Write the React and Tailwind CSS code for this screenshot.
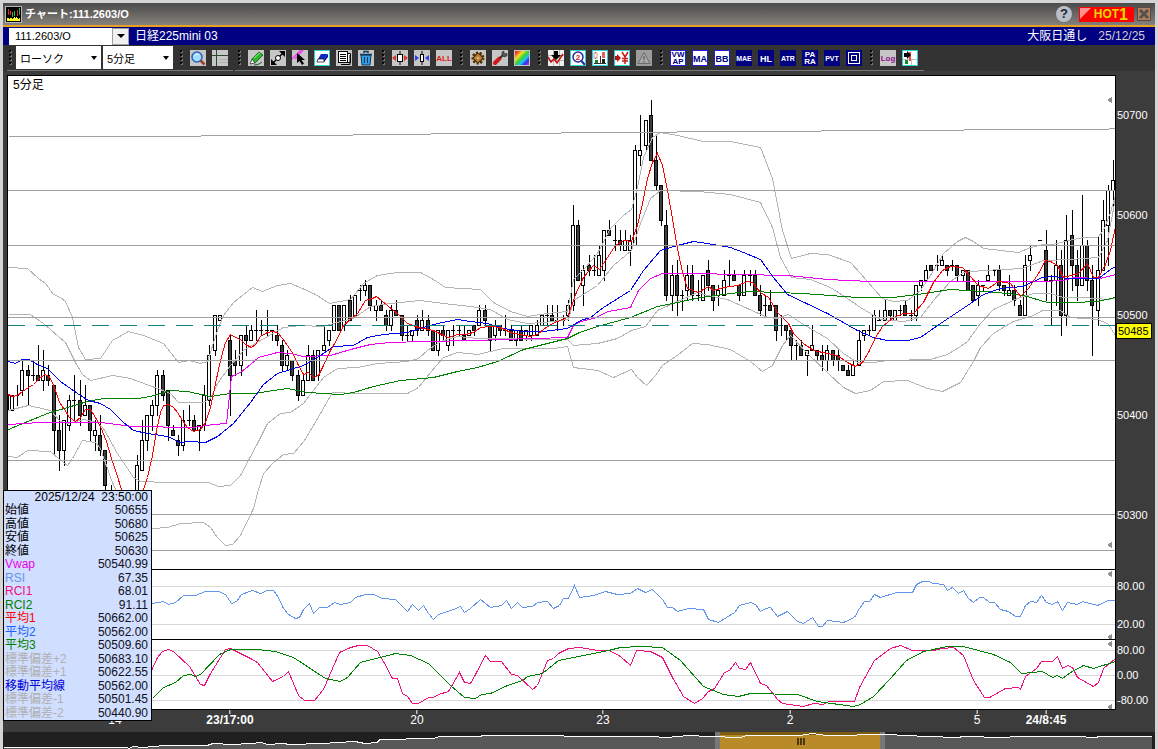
import { useState } from 'react'

// Each bar: [high, body top, body bottom, low, filled] on the chart's own vertical scale
const bars = [
  [385, 395, 410, 410, 0], [395, 395, 410, 410, 0], [385, 395, 395, 405, 0], [360, 370, 390, 395, 0],
  [365, 370, 375, 405, 1], [360, 375, 375, 380, 0], [345, 375, 380, 380, 1], [350, 370, 380, 390, 0],
  [365, 375, 380, 385, 1], [385, 385, 430, 455, 1], [415, 430, 450, 470, 1], [420, 420, 450, 465, 0],
  [395, 400, 425, 430, 0], [375, 400, 400, 420, 0], [380, 400, 415, 425, 1], [385, 405, 415, 415, 0],
  [405, 405, 430, 440, 1], [420, 430, 435, 450, 0], [415, 435, 450, 455, 1], [450, 450, 485, 500, 1],
  [485, 490, 500, 510, 1], null, null, null, null,
  [455, 465, 500, 510, 0], [420, 440, 470, 470, 0], [415, 415, 440, 450, 0], [400, 405, 415, 430, 0],
  [370, 375, 405, 415, 0], [370, 375, 395, 400, 1], [390, 390, 425, 440, 1], [425, 430, 435, 435, 1],
  [435, 440, 445, 455, 1], [410, 420, 445, 450, 0], [405, 420, 420, 425, 0], [415, 420, 430, 430, 1],
  [425, 425, 430, 450, 0], [385, 395, 425, 430, 0], [345, 355, 400, 405, 0], [315, 315, 350, 355, 0],
  [315, 315, 320, 320, 0], null,
  [335, 340, 375, 415, 1], [350, 360, 365, 375, 1], [335, 335, 365, 375, 0], [325, 335, 340, 355, 1],
  [325, 330, 340, 340, 0], [310, 330, 330, 340, 0], [320, 330, 330, 335, 0], [310, 330, 330, 335, 0],
  [330, 330, 330, 340, 0], [325, 335, 340, 345, 1], [340, 345, 365, 370, 1], [350, 355, 365, 370, 0],
  [360, 360, 375, 380, 1], [370, 375, 395, 400, 1], [375, 380, 395, 395, 0], [345, 355, 380, 380, 0],
  [350, 355, 380, 380, 1], [350, 350, 375, 380, 0], [325, 345, 350, 350, 0], [330, 330, 340, 345, 0],
  [305, 305, 330, 330, 0], [305, 305, 330, 330, 1], [305, 305, 325, 330, 0], [295, 300, 320, 320, 1],
  [295, 295, 315, 315, 0], [285, 290, 290, 300, 0], [280, 285, 290, 295, 0], [285, 285, 305, 310, 1],
  [300, 305, 310, 320, 0], [300, 305, 310, 310, 1], [310, 315, 325, 330, 1], [305, 310, 325, 330, 0],
  [300, 310, 315, 315, 1], [315, 315, 335, 340, 1], [325, 335, 335, 340, 0], [330, 330, 335, 340, 0],
  [315, 320, 330, 335, 1], [310, 320, 330, 330, 0], [315, 320, 330, 335, 1], [330, 330, 350, 350, 1],
  [330, 330, 350, 355, 0], [325, 330, 335, 340, 1], [330, 330, 345, 350, 0], [325, 330, 330, 345, 0],
  [325, 330, 330, 335, 0], [325, 335, 340, 340, 1], [330, 330, 335, 335, 0], [325, 325, 330, 335, 1],
  [305, 310, 325, 325, 0], [305, 310, 320, 325, 1], [325, 325, 340, 350, 1], [320, 325, 335, 340, 0],
  [325, 325, 330, 335, 1], [315, 330, 330, 335, 0], [325, 330, 340, 340, 1], [330, 330, 340, 345, 0],
  [325, 330, 340, 340, 1], [330, 330, 335, 340, 0], [325, 325, 335, 340, 0], [320, 325, 335, 335, 0],
  [315, 315, 325, 325, 0], [305, 315, 315, 325, 0], [305, 315, 320, 320, 1], [305, 320, 320, 330, 0],
  [315, 320, 320, 325, 0], [300, 305, 315, 320, 0], [205, 225, 305, 310, 0], [220, 225, 280, 280, 1],
  [265, 270, 285, 305, 0], [255, 265, 270, 275, 1], [255, 270, 270, 275, 0], [245, 255, 275, 275, 0],
  [230, 230, 270, 280, 0], [220, 230, 235, 235, 1], [225, 240, 240, 250, 0], [230, 240, 245, 250, 1],
  [230, 240, 250, 250, 0], [235, 240, 250, 265, 0], [145, 150, 245, 245, 0], [115, 150, 155, 165, 0],
  [120, 120, 145, 150, 0], [100, 115, 160, 160, 1], [135, 160, 185, 190, 1], [185, 185, 220, 225, 1],
  [210, 225, 295, 300, 1], [265, 275, 295, 310, 0], [260, 275, 295, 315, 1], [290, 295, 295, 310, 0],
  [265, 275, 290, 300, 0], [265, 275, 295, 300, 1], [280, 295, 295, 300, 0], [275, 275, 300, 300, 0],
  [260, 270, 285, 290, 1], [285, 285, 300, 310, 1], [285, 290, 295, 305, 0], [270, 280, 295, 295, 0],
  [260, 275, 275, 285, 0], [270, 275, 280, 280, 1], [285, 285, 295, 300, 1], [270, 275, 295, 295, 0],
  [270, 275, 275, 285, 0], [270, 275, 295, 295, 1], [285, 295, 310, 315, 1], [295, 305, 305, 315, 0],
  [290, 305, 310, 310, 1], [305, 305, 330, 340, 1], [315, 325, 325, 335, 0], [325, 325, 330, 340, 1],
  [330, 330, 345, 360, 1], [340, 345, 345, 360, 0], [340, 345, 355, 355, 1], [350, 350, 355, 375, 0],
  [325, 345, 350, 350, 0], [350, 350, 355, 360, 1], [345, 355, 360, 370, 1], [345, 350, 360, 370, 0],
  [350, 350, 360, 365, 1], [350, 355, 360, 370, 1], [365, 365, 370, 370, 1], [365, 370, 375, 375, 1],
  [360, 365, 375, 375, 0], [330, 340, 365, 365, 0], [330, 330, 335, 340, 0], [325, 330, 330, 335, 0],
  [310, 315, 330, 330, 0], [310, 320, 320, 320, 0], [300, 310, 320, 320, 0], [310, 310, 315, 320, 1],
  [310, 310, 320, 320, 0], [305, 310, 310, 315, 0], [300, 305, 315, 315, 1], [310, 315, 315, 320, 0],
  [285, 285, 315, 320, 0], [280, 280, 285, 290, 0], [265, 270, 280, 280, 0], [265, 265, 270, 270, 1],
  [255, 265, 265, 270, 0], [255, 260, 265, 265, 0], [265, 265, 270, 275, 1], [260, 265, 265, 270, 0],
  [265, 265, 275, 280, 1], [270, 270, 275, 280, 0], [270, 270, 290, 290, 1], [285, 285, 300, 300, 1],
  [280, 285, 295, 305, 0], [285, 285, 285, 290, 0], [265, 275, 280, 280, 0], [270, 270, 270, 275, 0],
  [265, 270, 285, 290, 1], [285, 285, 290, 295, 1], [275, 290, 295, 295, 0], [285, 290, 300, 305, 1],
  [300, 305, 315, 315, 1], [255, 265, 315, 315, 0], [245, 255, 260, 270, 0], null, [240, 240, 240, 240, 0],
  [230, 250, 280, 300, 1], [275, 280, 280, 325, 0], [240, 265, 280, 305, 0], [250, 265, 315, 335, 1],
  [215, 240, 315, 325, 0], [210, 235, 265, 290, 1], [250, 265, 285, 300, 1], [195, 245, 285, 285, 0],
  [240, 245, 280, 290, 1], [265, 280, 305, 355, 1], [237, 270, 310, 325, 0], [200, 220, 270, 270, 0],
  [185, 190, 225, 265, 0], [160, 180, 190, 210, 0],
]

const bands = [
  '8,267 27,268 38,278 45,283 53,294 60,297 65,301 72,317 78,347 85,359 100,358 112,340 128,331 143,335 163,343 178,362 189,360 200,363 207,361 217,330 223,315 233,302 252,287 262,291 277,285 290,283 302,288 315,294 329,303 350,299 363,283 377,275 397,272 420,272 433,279 445,287 480,289 493,302 510,311 527,316 547,313 567,311 573,279 585,267 597,253 610,228 623,215 631,209 637,187 643,157 652,137 660,132 677,135 703,141 730,141 760,147 772,178 782,230 791,258 810,253 827,254 850,262 860,273 873,288 882,298 893,301 907,300 920,290 930,275 943,253 957,241 965,237 973,241 983,248 1018,252 1030,247 1043,244 1053,244 1068,240 1083,237 1097,237 1103,230 1110,212 1115,195',
  '8,314 30,314 43,323 65,342 75,362 82,374 90,380 112,375 130,378 157,388 170,393 178,402 203,402 210,398 217,383 230,365 243,350 260,340 283,327 300,325 323,326 340,321 353,318 370,306 390,303 420,300 443,303 470,306 490,309 507,319 527,323 543,322 568,319 573,300 597,285 613,265 631,250 640,223 650,198 660,190 698,191 730,194 760,202 772,227 780,257 791,277 810,279 830,287 847,298 860,307 880,319 903,321 920,317 933,300 950,281 963,272 983,270 1022,268 1043,260 1070,259 1098,257 1107,240 1115,198',
  '8,410 20,407 28,405 37,407 50,410 60,421 68,423 83,419 97,422 103,428 117,453 133,477 140,481 167,482 208,482 218,486 230,485 240,475 257,443 267,423 280,413 290,412 303,403 323,377 337,368 357,367 377,363 407,361 418,358 427,350 440,341 457,336 477,338 567,339 573,345 597,343 617,338 631,330 645,326 657,310 677,301 697,292 707,295 727,299 747,308 767,317 777,318 788,314 803,324 827,338 843,353 857,362 873,362 887,360 930,359 947,354 960,346 967,341 980,323 993,309 1017,298 1033,293 1050,293 1063,297 1083,297 1107,299 1115,298',
  '8,456 17,457 27,450 50,451 58,458 67,465 72,458 82,440 95,442 100,448 110,477 115,489 125,515 140,528 152,528 167,527 180,523 203,522 210,527 217,537 225,545 232,544 240,535 253,508 258,489 263,473 273,462 283,454 293,453 304,440 310,430 320,413 332,392 357,393 407,393 418,387 430,372 443,357 457,352 477,354 503,348 553,348 567,346 573,367 597,370 613,377 631,369 637,377 646,385 655,375 662,365 678,354 692,343 707,344 730,349 750,361 762,371 772,365 782,345 790,335 807,353 827,372 843,387 855,393 870,390 883,381 907,380 927,388 942,391 960,382 973,361 980,347 993,333 1013,321 1033,315 1042,310 1060,310 1070,317 1097,319 1107,323 1115,335',
]

const ma1 = '8,394 12,396 17,395 22,391 28,387 33,384 38,379 44,374 49,376 54,387 59,402 64,409 69,417 75,421 80,417 85,409 90,409 95,417 100,426 106,441 111,458 116,473 121,489 130,505 143,489 147,477 152,455 156,430 160,412 163,405 168,404 173,407 177,412 182,420 187,427 193,431 200,429 205,422 210,407 215,383 220,360 225,342 230,334 235,337 240,339 245,344 251,347 255,344 260,336 267,332 272,331 277,332 282,338 287,345 293,354 297,363 303,374 308,372 313,377 318,375 323,365 330,350 337,338 343,325 350,319 357,313 365,300 372,298 376,296 381,300 387,305 393,310 398,314 407,323 415,326 423,328 433,330 443,335 448,337 457,334 465,334 473,332 480,327 490,326 500,327 510,332 520,334 530,336 537,334 543,329 550,324 557,321 567,317 575,294 583,277 593,265 599,269 607,257 615,245 623,240 631,241 637,225 642,203 647,178 652,162 657,153 662,165 667,190 672,218 677,248 682,272 687,288 698,292 708,286 713,290 723,287 737,285 747,281 752,282 760,292 768,297 777,312 788,323 793,333 803,343 813,350 827,353 837,355 847,362 855,366 862,362 868,352 875,337 882,326 893,317 903,313 913,313 923,302 933,282 942,270 950,266 962,267 970,276 978,285 988,288 998,281 1010,283 1020,296 1028,288 1038,273 1045,260 1050,261 1057,265 1063,277 1078,273 1087,263 1093,277 1098,277 1105,264 1110,250 1115,226'
const ma2 = '8,361 15,363 22,359 28,359 37,364 47,368 60,381 77,393 88,400 100,403 110,409 123,422 133,430 147,433 167,436 180,442 190,441 205,442 217,436 233,423 250,402 263,384 277,373 290,369 303,365 317,357 333,346 353,345 367,337 383,334 407,332 423,327 437,323 457,319 470,321 487,323 503,328 523,331 543,331 567,328 580,320 590,317 603,307 630,290 643,270 660,250 677,245 693,241 713,244 730,247 743,252 760,259 773,277 787,294 827,313 857,330 873,337 887,340 907,340 920,337 940,323 967,305 983,294 1000,288 1022,286 1042,277 1053,276 1067,278 1098,278 1110,269 1115,266'
const ma3 = '8,429 20,424 47,413 67,407 87,401 103,398 137,398 150,396 170,390 187,391 210,396 230,393 253,393 287,388 307,392 340,394 353,392 373,386 400,380 433,377 457,371 477,367 497,361 523,349 547,343 567,338 579,332 597,326 630,317 657,306 677,302 700,297 730,293 750,291 803,293 857,297 893,297 917,294 950,289 983,291 1007,293 1023,295 1047,302 1073,302 1097,301 1115,297'
const vwap = '8,424 40,422 100,422 132,426 192,427 213,424 226,423 231,376 240,372 250,364 258,357 277,352 290,353 303,356 330,355 350,349 370,344 390,342 423,341 477,340 500,339 567,337 573,325 580,321 593,318 608,311 630,307 638,290 650,278 662,273 693,273 787,275 827,279 870,281 1043,281 1063,280 1073,277 1100,278 1115,274'

const rsi = '130,604 152,603 163,601 168,604 175,602 183,595 195,595 205,591 218,591 225,594 231,603 236,601 241,594 252,590 260,593 267,590 273,590 278,597 283,608 288,614 295,618 299,617 303,609 309,603 313,613 319,607 327,607 334,602 340,604 350,602 355,597 365,594 373,594 382,598 395,599 407,611 412,604 418,610 423,605 428,613 433,619 438,614 453,609 460,606 464,612 470,608 480,599 490,607 501,605 506,600 511,608 517,602 522,607 532,606 537,602 547,601 553,608 559,605 563,598 568,598 574,585 579,597 593,595 605,591 617,594 630,593 637,588 645,592 652,589 662,599 667,607 672,607 677,611 688,608 703,609 708,619 718,622 734,612 739,605 750,602 755,604 760,611 765,608 770,607 777,616 787,611 797,621 803,623 812,617 818,626 822,626 827,620 843,622 854,617 859,608 864,601 869,601 874,594 880,597 896,592 912,592 916,584 922,581 928,581 933,583 943,584 947,590 952,587 958,593 963,590 968,598 973,602 979,597 983,597 989,602 994,602 1000,609 1008,611 1015,616 1020,616 1025,605 1030,601 1036,602 1041,595 1046,602 1052,604 1057,601 1062,610 1067,602 1077,604 1082,601 1097,605 1108,600 1115,600'
const rci1 = '145,685 152,668 157,657 162,651 168,649 173,651 189,666 200,684 204,685 210,673 225,649 230,648 250,658 257,662 272,681 283,676 288,671 298,695 304,700 314,700 323,689 332,668 339,652 350,647 358,645 367,645 377,651 383,661 392,678 397,678 402,693 407,696 412,703 418,703 428,697 433,697 438,694 448,691 459,672 464,682 470,683 475,674 485,655 490,661 501,661 511,674 517,675 532,689 537,685 547,660 553,658 558,653 568,648 580,647 597,650 609,650 620,656 630,665 636,650 650,651 662,657 672,677 683,696 694,703 702,698 708,691 714,688 724,672 729,670 735,662 739,668 745,669 750,662 760,683 766,685 777,699 782,703 803,706 813,703 823,704 828,701 854,701 859,687 874,660 890,648 900,645 912,650 933,650 942,648 953,647 963,655 973,680 984,697 989,697 1005,688 1018,687 1020,689 1025,676 1036,668 1041,661 1052,661 1057,656 1062,668 1067,665 1072,667 1077,677 1093,686 1098,682 1103,668 1115,658'
const rci2 = '140,704 152,698 163,687 175,682 183,675 190,674 195,676 200,674 219,654 230,649 257,649 275,651 293,657 325,678 340,681 347,677 360,662 395,653 410,655 428,663 450,685 464,697 475,698 481,694 490,693 507,685 522,680 527,676 542,673 558,660 583,655 608,650 620,647 640,646 662,647 680,660 703,686 723,694 738,696 750,693 797,694 817,701 853,706 860,704 873,696 890,678 906,660 923,651 947,646 963,646 993,654 1010,662 1021,673 1042,671 1052,677 1057,675 1062,678 1070,672 1083,665 1093,668 1115,661'

const overview = '4,747 127,747 129,748 133,746 143,747 165,745 207,745 213,743 233,744 250,743 262,742 267,744 283,743 290,744 323,743 337,742 355,741 365,743 377,742 380,739 433,738 440,736 480,736 483,735 550,735 578,736 650,736 667,737 688,735 710,736 740,737 747,735 800,735 812,733 827,735 887,734 927,736 958,737 963,736 1005,737 1015,736 1077,736 1095,737 1100,736 1152,736'

const readings = [
  ['始値', '50655', 'text-black'],
  ['高値', '50680', 'text-black'],
  ['安値', '50625', 'text-black'],
  ['終値', '50630', 'text-black'],
  ['Vwap', '50540.99', 'text-[#e800e8]'],
  ['RSI', '67.35', 'text-[#6495ed]'],
  ['RCI1', '68.01', 'text-[#f0107c]'],
  ['RCI2', '91.11', 'text-[#008000]'],
  ['平均1', '50662.00', 'text-[#ff0000]'],
  ['平均2', '50562.00', 'text-[#2060ff]'],
  ['平均3', '50509.60', 'text-[#008000]'],
  ['標準偏差+2', '50683.10', 'text-[#b0b0b0]'],
  ['標準偏差+1', '50622.55', 'text-[#b0b0b0]'],
  ['移動平均線', '50562.00', 'text-[#0000d8]'],
  ['標準偏差-1', '50501.45', 'text-[#b0b0b0]'],
  ['標準偏差-2', '50440.90', 'text-[#b0b0b0]'],
]

const timeTicks = [
  { x: 115, text: '14' },
  { x: 230, text: '23/17:00', bold: true },
  { x: 417, text: '20' },
  { x: 603, text: '23' },
  { x: 790, text: '2' },
  { x: 977, text: '5' },
  { x: 1046, text: '24/8:45', bold: true },
]

const priceLabels = [
  ['50700', 115], ['50600', 215], ['50500', 315], ['50400', 415], ['50300', 515],
  ['80.00', 586], ['20.00', 624], ['80.00', 650], ['0.00', 675], ['-80.00', 700],
]

function Grip() {
  return (
    <svg width="4" height="16" viewBox="0 0 4 16" className="shrink-0" aria-hidden="true">
      {[0, 4, 8, 12].map((y) => (
        <g key={y}>
          <rect x="1" y={y + 1} width="2" height="2" fill="#777" />
          <rect x="0" y={y} width="2" height="2" fill="#0a0a0a" />
        </g>
      ))}
    </svg>
  )
}

function Tool({ label, bg = '#c6c6c6', edge, children }) {
  return (
    <button type="button" aria-label={label} className="block h-4 w-4 shrink-0">
      <svg width="16" height="16" viewBox="0 0 16 16">
        <rect width="16" height="16" fill={bg} />
        {children}
        {edge && <rect x="0.5" y="0.5" width="15" height="15" fill="none" stroke={edge} />}
      </svg>
    </button>
  )
}

function TextTool({ lines, dark }) {
  const two = lines.length > 1
  return (
    <Tool label={lines.join('')} bg={dark ? '#000080' : '#ffffff'} edge={dark ? undefined : '#2020d8'}>
      {lines.map((t, i) => (
        <text
          key={t}
          x="8"
          y={two ? 7 + i * 7 : t.length > 2 ? 11 : 12}
          textAnchor="middle"
          fontSize={two ? 8 : t.length > 2 ? 7 : 9}
          fontWeight="bold"
          fill={dark ? '#fff' : '#000080'}
        >
          {t}
        </text>
      ))}
    </Tool>
  )
}

function Group({ children, className = '' }) {
  return (
    <div className={`flex items-center gap-[6px] ${className}`}>
      <Grip />
      {children}
    </div>
  )
}

function Combo({ label, value, options, onChange, className }) {
  return (
    <div className={`relative h-[23px] bg-white ${className}`}>
      <select
        aria-label={label}
        value={value}
        onChange={(e) => onChange(e.target.value)}
        className="h-full w-full appearance-none bg-transparent pl-1 text-[11px] text-black outline-none"
      >
        {options.map((o) => (
          <option key={o}>{o}</option>
        ))}
      </select>
      <svg className="pointer-events-none absolute right-1 top-[10px]" width="6" height="4" viewBox="0 0 6 4">
        <path d="M0 0h6L3 4z" fill="#000" />
      </svg>
    </div>
  )
}

function Candles() {
  return bars.map((b, i) => {
    if (!b) return null
    const [high, top, bottom, low, filled] = b
    const x = Math.round(12 + 5.194 * (i - 1))
    if (top === bottom) {
      return (
        <g key={i}>
          <rect x={x} y={high} width="1" height={low - high + 1} />
          <rect x={x - 2} y={top} width="4" height="1" />
        </g>
      )
    }
    return (
      <g key={i}>
        <rect x={x} y={high} width="1" height={low - high + 1} />
        <rect x={x - 2} y={top} width="4" height={bottom - top + 1} />
        <rect x={x - 1} y={top + 1} width="2" height={bottom - top - 1} fill={filled ? '#3c3c3c' : '#fff'} />
      </g>
    )
  })
}

function Line({ points, color }) {
  return <polyline points={points} fill="none" stroke={color} transform="translate(0.5 0.5)" />
}

function Chart() {
  return (
    <svg
      viewBox="7 75 1109 635"
      preserveAspectRatio="none"
      shapeRendering="crispEdges"
      className="block h-[635px] w-full bg-white"
    >
      <Candles />
      {bands.map((p, i) => (
        <Line key={i} points={p} color="#b4b4b4" />
      ))}
      <Line points={ma3} color="#008000" />
      <Line points={vwap} color="#f000f0" />
      <Line points={ma2} color="#0000f0" />
      <Line points={ma1} color="#ff0000" />
      <path d="M8 325.5H1116" stroke="#108080" strokeDasharray="17 11" />
      <Line points="8,136 200,136 201,135 352,135 353,134 430,134 431,133 560,133 561,132 676,132 677,131 820,131 821,130 963,130 964,129 1108,129 1109,128 1116,128" color="#a0a0a0" />
      {[190, 245, 317, 360, 460, 514, 550].map((y) => (
        <path key={y} d={`M8 ${y + 0.5}H1116`} stroke="#a0a0a0" />
      ))}

      {[586, 624, 650, 675, 700].map((y) => (
        <path key={y} d={`M8 ${y + 0.5}H1116`} stroke="#d8d8d8" />
      ))}
      <Line points={rsi} color="#6495ed" />
      <Line points={rci1} color="#f0107c" />
      <Line points={rci2} color="#008000" />

      {[100, 545, 574, 637, 644, 707].map((y) => (
        <path key={y} d={`M1107 ${y}l5 -3v6z`} fill="#909090" />
      ))}
      <path d="M7 75.5H1116M7 569.5H1116M7 639.5H1116M7 709.5H1116M7.5 75V710M1115.5 75V710" stroke="#000" />
    </svg>
  )
}

function PriceAxis() {
  return (
    <div className="w-[39px] shrink-0">
      <svg width="39" height="635" viewBox="0 75 39 635" className="block overflow-visible">
        {priceLabels.map(([text, y]) => (
          <text key={y} x="1" y={y + 4} fontSize="11" fill="#fff">
            {text}
          </text>
        ))}
        <rect x="0.5" y="323.5" width="35" height="15" fill="#ffff00" stroke="#000" />
        <text x="2" y="335" fontSize="11" fill="#000">50485</text>
      </svg>
    </div>
  )
}

function InfoPanel() {
  return (
    <table className="absolute left-0 top-[419px] h-[231px] w-[149px] border-collapse border border-black bg-[#d0deff] text-[12px] leading-[13px]">
      <thead>
        <tr>
          <th colSpan={2} className="p-0 pr-[3px] text-right font-normal text-black">
            2025/12/24&nbsp; 23:50:00
          </th>
        </tr>
      </thead>
      <tbody>
        {readings.map(([name, value, color]) => (
          <tr key={name}>
            <th scope="row" className={`whitespace-nowrap p-0 pl-px text-left font-normal ${color}`}>
              {name}
            </th>
            <td className="p-0 pr-[3px] text-right text-[#101020]">{value}</td>
          </tr>
        ))}
      </tbody>
    </table>
  )
}

function TitleBar() {
  return (
    <header className="flex h-[22px] items-center bg-gradient-to-b from-[#4b4b4a] to-[#85827d] pl-[2px] pr-1">
      <svg width="17" height="17" viewBox="0 0 17 17" shapeRendering="crispEdges">
        <rect x="0.5" y="0.5" width="16" height="16" fill="#000" stroke="#b8b8b8" />
        <path d="M3 3v6M5 5v4M12 4v6" stroke="#f02020" />
        <path d="M7 6v5M9 5v5M14 2v7" stroke="#20c040" />
        <path d="M2 15v-3l1-1 1 2 2-1 1 1 2-2 1 1 2-1 1 2 2-2v4z" fill="#ffff30" />
      </svg>
      <h1 className="ml-[3px] text-[11px] font-bold text-white">チャート:111.2603/O</h1>
      <div className="ml-auto flex items-center">
        <button type="button" aria-label="ヘルプ" className="mr-[7px] h-4 w-4 rounded-full bg-[#b9bfc9] text-[13px] font-bold leading-4 text-[#20242c]">
          ?
        </button>
        <button type="button" className="relative flex h-[15px] w-[55px] items-center justify-end bg-[#ff0000] pr-[6px] font-bold text-[#e8d800]">
          <svg className="absolute left-0 top-0" width="12" height="12" viewBox="0 0 12 12">
            <path d="M1 1h11L1 12z" fill="#ff9090" />
          </svg>
          <span className="text-[12px] leading-[15px]">HOT</span>
          <span className="text-[16px] leading-[15px]">1</span>
        </button>
        <button type="button" aria-label="閉じる" className="ml-[3px] h-[14px] w-[14px] border border-[#5c4a40] bg-[#b08060]">
          <svg width="12" height="12" viewBox="0 0 12 12">
            <path d="M2 2l8 8M10 2l-8 8" stroke="#55504c" strokeWidth="3" />
          </svg>
        </button>
      </div>
    </header>
  )
}

function Toolbar() {
  const [kind, setKind] = useState('ローソク')
  const [span, setSpan] = useState('5分足')

  return (
    <div className="flex h-[26px] gap-[2px] bg-[#333333] pl-1">
      <div className="flex items-center border-b border-[#787878] pl-[2px] pr-[5px]">
        <Grip />
        <Combo label="チャート種類" value={kind} options={['ローソク', 'ライン']} onChange={setKind} className="ml-[3px] w-[85px]" />
        <Combo label="足種" value={span} options={['5分足', '日足']} onChange={setSpan} className="ml-[2px] w-[70px]" />
        <Group className="ml-[7px]">
          <Tool label="拡大">
            <circle cx="7" cy="7" r="5" fill="#a8dcff" stroke="#2464c8" strokeWidth="1.5" />
            <path d="M5 5.5c1-1.5 2.5-1.500 3.500-1" stroke="#fff" fill="none" />
            <path d="M10.500 10.500L14.500 14.500" stroke="#a04020" strokeWidth="2.500" />
          </Tool>
          <Tool label="十字線">
            <path d="M0 5.500H16M4.500 0V16" stroke="#284c28" shapeRendering="crispEdges" />
            <path d="M7 9.500h9M7 12.500h9" stroke="#b0b0b0" />
          </Tool>
        </Group>
      </div>
      <div className="flex items-center gap-2 border-b border-[#787878] pl-[3px] pr-[6px]">
        <Group>
          <Tool label="ペン">
            <path d="M4 9l7-7 4 3-8 8z" fill="#28b828" stroke="#106010" strokeWidth="0.800" />
            <path d="M4 9l3 4-5 1z" fill="#fff" stroke="#333" strokeWidth="0.800" />
            <path d="M6 8l6-5" stroke="#90f090" />
            <path d="M6 15c3 0 6-1 8-3" stroke="#106010" fill="none" />
          </Tool>
          <Tool label="線移動">
            <path d="M1.500 14.500L14.500 1.500" stroke="#000" strokeWidth="1.500" />
            <path d="M15 1v6l-2.500-2.500L9 1zM1 15V9l2.500 2.500L7 15z" fill="#000" />
            <circle cx="8" cy="8" r="2.500" fill="#fff" stroke="#000" />
          </Tool>
          <Tool label="線選択">
            <path d="M0 9L9 0M3 9l8-9" stroke="#f040f0" strokeWidth="1.500" />
            <path d="M5 3v10l2.500-2 2.500 4 2-1.500L9.500 10H13z" fill="#000" />
          </Tool>
          <Tool label="消しゴム" bg="#fff" edge="#30d0d8">
            <path d="M7 4h7l-4 5H4z" fill="#0828c0" />
            <path d="M4 9h6v3H3z" fill="#fff" stroke="#222" strokeWidth="0.800" />
            <path d="M10 9l4-5v3l-4 5z" fill="#0010a0" />
          </Tool>
          <Tool label="コピー">
            <path d="M5.500 4V3.500h9v9H12M7 2.500" fill="#fff" stroke="#000" />
            <rect x="2.500" y="1.500" width="9" height="11" fill="#fff" stroke="#000" />
            <path d="M4 4.500h6M4 6.500h6M4 8.500h6M4 10.500h6M5 14.500h9V5" stroke="#000" fill="none" />
          </Tool>
          <Tool label="削除">
            <path d="M3 5h10l-1 10H4z" fill="#30a0e8" stroke="#103858" />
            <path d="M2 4.500h12M6 3V1.500h4V3" stroke="#103858" strokeWidth="1.500" fill="none" />
            <path d="M6.500 7v6M9.500 7v6" stroke="#103858" />
          </Tool>
        </Group>
        <Group>
          <Tool label="広げる">
            <path d="M8 1v14" stroke="#000" />
            <rect x="5.500" y="4.500" width="5" height="7" fill="#fff" stroke="#000" />
            <path d="M4 5v6L0 8zM12 5v6l4-3z" fill="#e03030" />
          </Tool>
          <Tool label="縮める">
            <path d="M8 1v14" stroke="#000" />
            <rect x="6.500" y="4.500" width="3" height="7" fill="#fff" stroke="#000" />
            <path d="M1 5v6l4-3zM15 5v6l-4-3z" fill="#3040f0" />
          </Tool>
          <Tool label="ALL">
            <text x="8" y="11" textAnchor="middle" fontSize="8" fontWeight="bold" fill="#e01818">ALL</text>
          </Tool>
        </Group>
        <Group>
          <Tool label="設定">
            <circle cx="8" cy="8" r="5" fill="#906020" stroke="#503008" strokeWidth="3" strokeDasharray="2 1.500" />
            <path d="M8 3l5 5-5 5-5-5z" fill="#b07830" stroke="#503008" />
            <circle cx="8" cy="8" r="1.500" fill="#d8b070" />
          </Tool>
          <Tool label="ツール">
            <path d="M3 13L7.500 8.500" stroke="#d01818" strokeWidth="4" strokeLinecap="round" />
            <path d="M8 8l3-3" stroke="#333" strokeWidth="2" />
            <path d="M10 5V2l2-1v2l2 1 1-1v3l-3 1z" fill="#555" stroke="#222" strokeWidth="0.500" />
          </Tool>
          <Tool label="配色">
            <defs>
              <linearGradient id="rainbow" x1="0" y1="0" x2="1" y2="1">
                <stop offset="0.1" stopColor="#f03030" />
                <stop offset="0.3" stopColor="#f8e020" />
                <stop offset="0.5" stopColor="#30d040" />
                <stop offset="0.65" stopColor="#20c8f0" />
                <stop offset="0.8" stopColor="#3030f0" />
                <stop offset="1" stopColor="#d030e0" />
              </linearGradient>
            </defs>
            <rect x="1" y="1" width="14" height="14" fill="url(#rainbow)" />
          </Tool>
        </Group>
        <Group>
          <Tool label="売買シグナル" bg="#f0f0f0">
            <path d="M0 5.500h16M0 10.500h16M5.500 0v16M11.500 0v16" stroke="#b8b8b8" />
            <path d="M0 7l3 5 3-3 3 4 6-9" stroke="#c01010" strokeWidth="1.500" fill="none" />
            <path d="M6 1h4v4h3l-5 5-5-5h3z" fill="#000" />
          </Tool>
          <Tool label="検索2" bg="#fff" edge="#30d0d8">
            <circle cx="8" cy="7" r="5" fill="#fff" stroke="#2828a0" strokeWidth="1.500" />
            <path d="M11.500 11L15 15" stroke="#2828a0" strokeWidth="2" />
            <text x="8" y="10" textAnchor="middle" fontSize="8" fontWeight="bold" fill="#e02020">2</text>
          </Tool>
          <Tool label="比較" bg="#fff" edge="#30d0d8">
            <path d="M2 13.500h12M8.500 6v7M3.500 2v7" stroke="#333" />
            <rect x="2" y="3" width="3" height="5" fill="#fff" stroke="#d09090" />
            <rect x="10" y="2" width="3" height="6" fill="#e86060" />
            <rect x="3" y="10" width="3" height="3" fill="#208020" />
            <rect x="10" y="9" width="3" height="4" fill="#222" />
          </Tool>
          <Tool label="注文" bg="#fff" edge="#30d0d8">
            <path d="M1 6h2V4l4 4-4 4v-2H1z" fill="#c01010" />
            <path d="M8 2l3 5 3-5M11 7v7M8 8.500h6M8 11h6" stroke="#d01818" strokeWidth="1.500" fill="none" />
          </Tool>
          <Tool label="警告" bg="#9c9c9c">
            <path d="M8 2.500l6 11H2z" fill="#a8a8a8" stroke="#6c6c6c" />
            <path d="M8 6v4M8 11v1.500" stroke="#6c6c6c" strokeWidth="1.500" />
          </Tool>
        </Group>
        <Group>
          <TextTool lines={['VW', 'AP']} />
          <TextTool lines={['MA']} />
          <TextTool lines={['BB']} />
          <TextTool lines={['MAE']} dark />
          <TextTool lines={['HL']} dark />
          <TextTool lines={['ATR']} dark />
          <TextTool lines={['PA', 'RA']} dark />
          <TextTool lines={['PVT']} dark />
          <Tool label="枠" bg="#000080">
            <rect x="2.500" y="2.500" width="11" height="11" fill="none" stroke="#fff" />
            <rect x="5.500" y="5.500" width="5" height="5" fill="none" stroke="#fff" />
          </Tool>
        </Group>
        <Group>
          <Tool label="Log">
            <text x="8" y="11" textAnchor="middle" fontSize="8" fontWeight="bold" fill="#90108c">Log</text>
          </Tool>
          <Tool label="表示切替" bg="#fff" edge="#30d0d8">
            <path d="M1 9.500h14M9.500 9v6" stroke="#c0c0c0" />
            <rect x="7" y="2" width="2" height="9" fill="#f04848" />
            <rect x="3" y="10" width="3" height="4" fill="#109030" />
            <path d="M2 3h3V1l4 4-4 4V7H2z" fill="#000" />
          </Tool>
        </Group>
      </div>
    </div>
  )
}

function Overview() {
  return (
    <div className="relative h-[17px] bg-[#202020]">
      <svg viewBox="3 732 1152 17" preserveAspectRatio="none" shapeRendering="crispEdges" className="block h-full w-full">
        <polygon points={`4,749 ${overview} 1152,749`} fill="#585858" />
        <rect x="715" y="732" width="170" height="17" fill="#787878" />
        <rect x="720" y="732" width="160" height="17" fill="#b88a28" />
        <rect x="720" y="732" width="160" height="3" fill="#7c5c10" />
        <polyline points={overview} fill="none" stroke="#fff" transform="translate(0 0.5)" />
        <path d="M797.5 738v7M800.5 738v7M803.5 738v7" stroke="#4c3808" strokeWidth="2" />
      </svg>
    </div>
  )
}

export default function App() {
  const [symbol, setSymbol] = useState('111.2603/O')

  return (
    <div className="border-x-[3px] border-t-[3px] border-[#d4d4d4] bg-[#3c3c3c] font-['Liberation_Sans','Noto_Sans_CJK_JP',sans-serif]">
      <TitleBar />

      {/* Symbol row */}
      <div className="flex h-5 items-center border-t-2 border-[#e8a020] bg-[#000080] pl-[6px] pr-[10px] text-[12px] text-white">
        <input
          aria-label="銘柄コード"
          value={symbol}
          onChange={(e) => setSymbol(e.target.value)}
          className="h-[17px] w-[103px] bg-white pl-[6px] text-[11px] text-black outline-none"
        />
        <button type="button" aria-label="銘柄一覧" className="flex h-[17px] w-[17px] items-center justify-center border border-[#a0a0a0] bg-[#f0f0f0]">
          <svg width="8" height="4" viewBox="0 0 8 4">
            <path d="M0 0h8L4 4z" fill="#000" />
          </svg>
        </button>
        <span className="ml-[6px]">日経225mini 03</span>
        <span className="ml-auto">大阪日通し</span>
        <span className="ml-[11px] text-[#d0d0d0]">25/12/25</span>
      </div>

      {/* Chart area */}
      <main>
        <Toolbar />
        <div className="relative flex pl-1 pt-1">
          <div className="relative min-w-0 flex-1">
            <Chart />
            <span className="absolute left-[6px] top-[2px] text-[12px] leading-4 text-black">5分足</span>
            <div className="relative h-[22px]">
              {timeTicks.map((t) => (
                <div
                  key={t.text}
                  className="absolute top-0 flex -translate-x-1/2 flex-col items-center text-[12px] leading-[13px] text-white"
                  style={{ left: `${((t.x - 7) / 1109) * 100}%` }}
                >
                  <span className="h-1 w-px bg-white" />
                  <span className={t.bold ? 'font-bold' : ''}>{t.text}</span>
                </div>
              ))}
            </div>
          </div>
          <PriceAxis />
          <InfoPanel />
        </div>
      </main>

      <Overview />
    </div>
  )
}
